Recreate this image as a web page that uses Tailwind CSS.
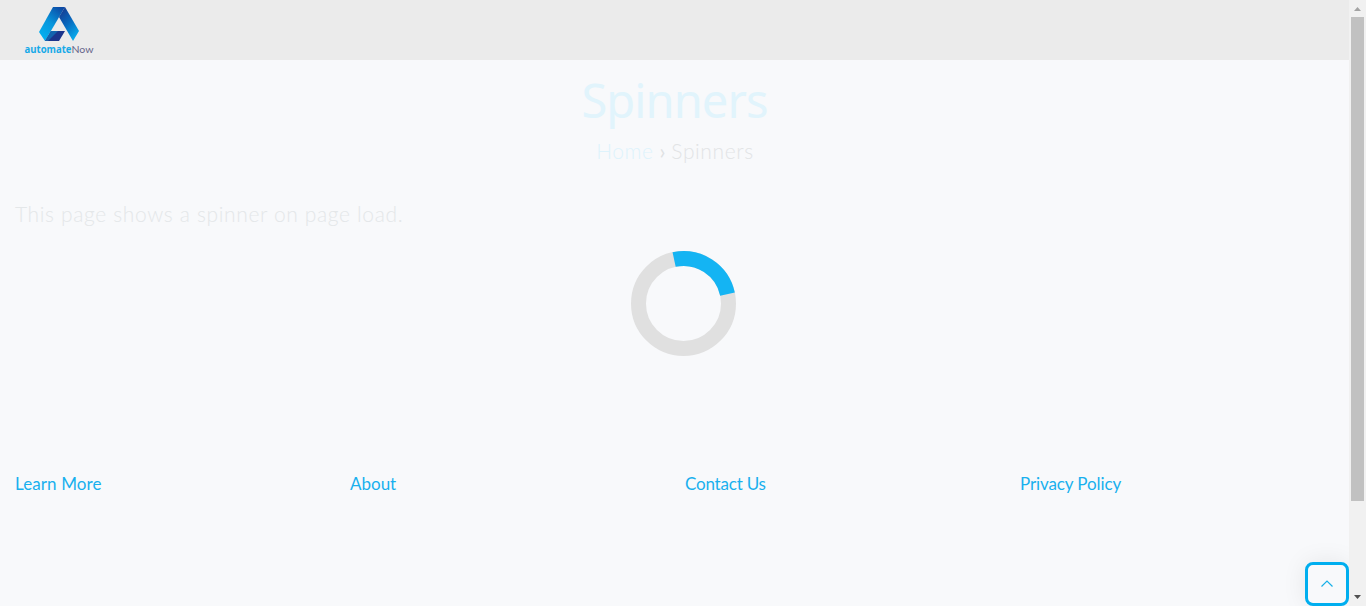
<!DOCTYPE html>
<html lang="en">
<head>
<meta charset="utf-8">
<title>Spinners</title>
<script src="https://cdn.jsdelivr.net/npm/@tailwindcss/browser@4"></script>
</head>
<body class="relative flex h-[606px] overflow-hidden bg-[#f8f9fb] font-[Lato,sans-serif]">
  <div class="flex min-w-0 flex-1 flex-col">
    <header class="h-[60px] shrink-0 bg-[#ebebeb] pl-6 pt-[6px]">
      <svg class="block" width="72" height="50" viewBox="0 0 72 50">
        <defs>
          <linearGradient id="left" x1="0.8" y1="0" x2="0.2" y2="1"><stop offset="0" stop-color="#0c4aa5"/><stop offset=".5" stop-color="#0796dc"/><stop offset="1" stop-color="#04b2f2"/></linearGradient>
          <linearGradient id="right" x1="0.2" y1="0" x2="0.8" y2="1"><stop offset="0" stop-color="#163b91"/><stop offset=".45" stop-color="#0868bd"/><stop offset="1" stop-color="#08b3f2"/></linearGradient>
        </defs>
        <path d="M29 1H41L21 35L15 26Z" fill="url(#left)"/>
        <path d="M41 1L55 25L49 35L35 11Z" fill="url(#right)"/>
        <path d="M27 25H41L35 35H21Z" fill="#1b348c"/>
        <path d="M21 35L27 25H34L24 35Z" fill="#1263ae"/>
        <text x="0.5" y="46.5" font-size="10" font-weight="700" fill="#16a9e8" font-family="Open Sans" textLength="47" lengthAdjust="spacingAndGlyphs">automate</text>
        <text x="47.5" y="46.5" font-size="9.5" fill="#66658a" font-family="Lato" textLength="22" lengthAdjust="spacingAndGlyphs">Now</text>
      </svg>
    </header>
    <main class="flex h-[410px] shrink-0 flex-col px-[15px]">
      <h1 class="mt-[8px] h-[64px] text-center font-['Noto_Sans'] text-[47px] leading-[64px] tracking-[-0.9px] text-[#e1f4fc]">Spinners</h1>
      <nav class="mt-[4px] flex h-[30px] items-center justify-center gap-[6px] pl-px text-[21px] font-light leading-[30px]">
        <a class="tracking-[0.5px] text-[#def3fc]">Home</a><span class="font-normal text-[#dfe1e3]">›</span><span class="tracking-[0.6px] text-[#e2e4e6]">Spinners</span>
      </nav>
      <p class="mt-[33px] h-[30px] text-[21px] font-light leading-[30px] tracking-[0.64px] text-[#e4e7e9]">This page shows a spinner on page load.</p>
    </main>
    <footer class="grid grid-cols-[repeat(4,335px)] pl-[15px] text-[17px] leading-7 text-[#18b0ee]">
      <a class="tracking-[0.1px]">Learn More</a><a>About</a><a class="tracking-[-0.2px]">Contact Us</a><a class="tracking-[-0.1px]">Privacy Policy</a>
    </footer>
  </div>
  <div class="flex w-[17px] shrink-0 flex-col items-center bg-[#f1f1f1]">
    <svg class="h-[17px] w-[17px] shrink-0" viewBox="0 0 17 17"><path d="M5 11H12L8.5 7Z" fill="#a3a3a3"/></svg>
    <div class="h-[484px] w-[13px] bg-[#c1c1c1]"></div>
    <svg class="mt-auto h-[17px] w-[17px] shrink-0" viewBox="0 0 17 17"><path d="M5 6H12L8.5 10Z" fill="#505050"/></svg>
  </div>
  <div class="pointer-events-none absolute inset-0 flex items-center justify-center">
    <svg width="106" height="106" viewBox="-53 -53 106 106" fill="none" stroke-width="15">
      <circle cx="0.5" cy="0.5" r="45" stroke="#e0e0e0"/>
      <path d="M-8.9 -43.5A45 45 0 0 1 44.5 -8.9" stroke="#14b4f3"/>
    </svg>
  </div>
  <button class="absolute bottom-0 right-[17px] flex size-11 items-center justify-center rounded-lg border-[3px] border-[#00aeef] bg-[#f8f9fb] shadow-[0_0_25px_rgba(0,0,0,0.08)] [clip-path:inset(-30px_0_0_-30px)]">
    <svg width="14" height="10" viewBox="0 0 14 10" fill="none" stroke="#18b0e8" stroke-width="1.2"><path d="M1.5 7.5L7 2L12.5 7.5"/></svg>
  </button>
</body>
</html>
